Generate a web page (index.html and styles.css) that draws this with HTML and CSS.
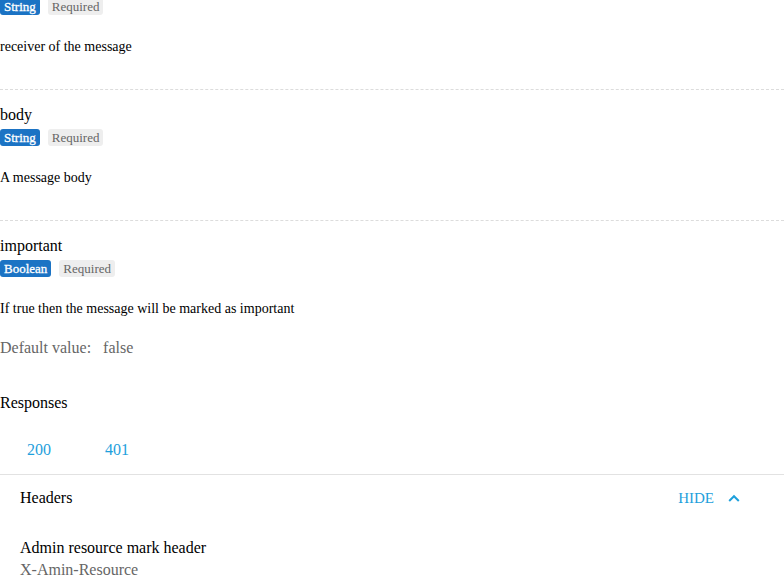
FILE: index.html
```html
<!DOCTYPE html>
<html>
<head>
<meta charset="utf-8">
<link rel="stylesheet" href="styles.css">
</head>
<body>
<div class="page">
  <div class="params">
    <div class="param">
      <div class="param-name">to</div>
      <div class="badges"><span class="badge badge-type">String</span><span class="badge badge-req">Required</span></div>
      <p class="param-desc">receiver of the message</p>
    </div>
    <div class="param">
      <div class="param-name">body</div>
      <div class="badges"><span class="badge badge-type">String</span><span class="badge badge-req">Required</span></div>
      <p class="param-desc">A message body</p>
    </div>
    <div class="param param-last">
      <div class="param-name">important</div>
      <div class="badges"><span class="badge badge-type">Boolean</span><span class="badge badge-req">Required</span></div>
      <p class="param-desc">If true then the message will be marked as important</p>
      <div class="default"><span>Default value:</span><span>false</span></div>
    </div>
  </div>

  <h3 class="section-title">Responses</h3>
  <div class="tabs">
    <span class="tab">200</span>
    <span class="tab">401</span>
  </div>
  <div class="panel">
    <div class="panel-head">
      <span class="panel-title">Headers</span>
      <span class="toggle">HIDE
        <svg width="12" height="8" viewBox="0 0 12 8"><path d="M1.2 7 L6 2.2 L10.8 7" fill="none" stroke="#1ea0dc" stroke-width="2"/></svg>
      </span>
    </div>
    <div class="header-item">
      <div class="header-desc">Admin resource mark header</div>
      <div class="header-name">X-Amin-Resource</div>
      <div class="badges"><span class="badge badge-type">Boolean</span><span class="badge badge-req">Required</span></div>
    </div>
  </div>
</div>
</body>
</html>
```

FILE: styles.css
```css
html, body {
  margin: 0;
  padding: 0;
  background: #fff;
}
body {
  font-family: "Liberation Serif", "Times New Roman", serif;
  color: #000;
  overflow: hidden;
}
.page {
  margin-top: -25px;
}
.param {
  padding: 16px 0 34px;
  border-bottom: 1px dashed #dcdcdc;
}
.param:first-child {
  padding-top: 0;
}
.param-last {
  border-bottom: none;
  padding-bottom: 37px;
}
.param-name {
  font-size: 16px;
  line-height: 18px;
}
.badges {
  display: flex;
  gap: 8px;
  margin-top: 5px;
}
.badge {
  font-size: 13px;
  line-height: 17px;
  height: 17px;
  padding: 0 4px;
  border-radius: 3px;
}
.badge-type {
  background: #1b73c4;
  color: #fff;
  -webkit-text-stroke: 0.3px #fff;
}
.badge-req {
  background: #eeeeee;
  color: #666;
}
.param-desc {
  margin: 24px 0 0;
  font-size: 14px;
  line-height: 16px;
}
.default {
  margin-top: 22px;
  font-size: 16px;
  line-height: 18px;
  color: #666;
  display: flex;
  gap: 12px;
}
.section-title {
  margin: 0;
  font-size: 16px;
  font-weight: normal;
  line-height: 18px;
}
.tabs {
  display: flex;
  margin-top: 29px;
}
.tab {
  font-size: 16px;
  line-height: 18px;
  padding: 0 27px 15px;
  color: #1ea0dc;
}
.panel {
  border-top: 1px solid #e2e2e2;
  padding: 0 20px;
}
.panel-head {
  display: flex;
  justify-content: space-between;
  align-items: center;
  padding-top: 14px;
  font-size: 16px;
  line-height: 18px;
}
.toggle {
  display: flex;
  align-items: center;
  gap: 14px;
  margin-right: 24px;
  color: #1ea0dc;
  font-size: 15px;
}
.header-item {
  margin-top: 32px;
}
.header-desc {
  font-size: 16px;
  line-height: 18px;
}
.header-name {
  margin-top: 4px;
  font-size: 16px;
  line-height: 18px;
  color: #666;
}
```
